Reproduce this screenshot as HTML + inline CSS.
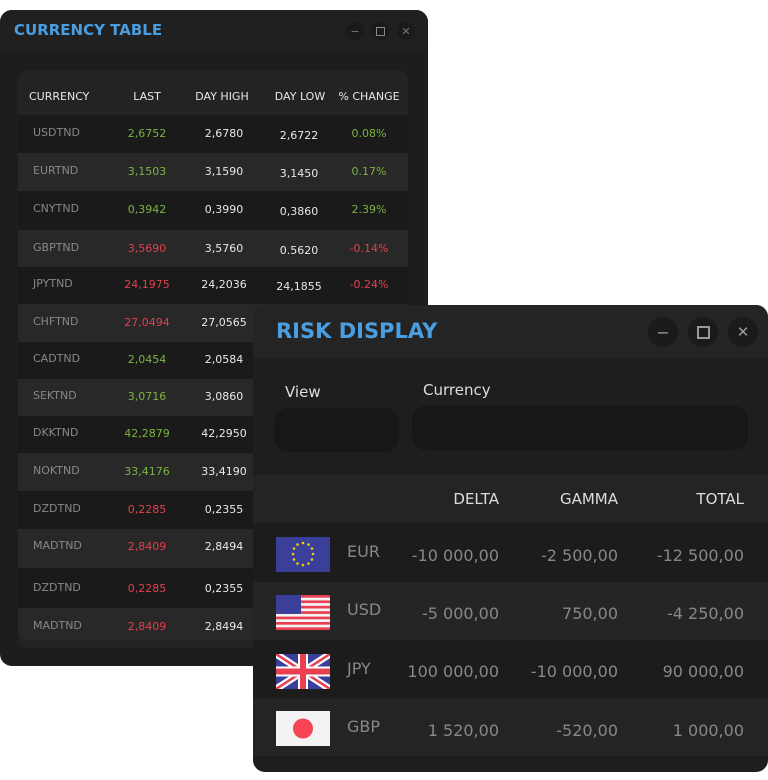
<!DOCTYPE html>
<html><head><style>
*{margin:0;padding:0;box-sizing:border-box}
body{width:768px;height:780px;background:#fff;position:relative;overflow:hidden;font-family:"DejaVu Sans","Liberation Sans",sans-serif}
.win{position:absolute;background:#1e1e1e;border-radius:12px;overflow:hidden}
.t{position:absolute;white-space:nowrap}
.c{transform:translateX(-50%)}
.r{transform:translateX(-100%)}
.btn{position:absolute;border-radius:50%;background:#1a1a1a;color:#777;display:flex;align-items:center;justify-content:center}
.g{color:#7cb342}.rd{color:#e0404e}.w{color:#e8e8e8}.n{color:#888}
#ct{position:absolute;left:18px;top:0;width:390px;height:700px;font-size:11px;z-index:1}
#rw{z-index:2}
</style></head><body>

<div class="win" style="left:0;top:10px;width:428px;height:656px;background:#1d1d1d">
 <div style="position:absolute;left:0;top:0;width:428px;height:42px;background:#202020"></div>
 <div class="t" style="left:14px;top:11px;font-size:15px;font-weight:bold;color:#4a9ee0">CURRENCY TABLE</div>
 <div class="btn" style="left:346px;top:12px;width:18px;height:18px;font-size:11px">−</div>
 <div class="btn" style="left:371px;top:12px;width:18px;height:18px"><div style="width:9px;height:9px;border:1.5px solid #888"></div></div>
 <div class="btn" style="left:397px;top:12px;width:18px;height:18px;font-size:11px">✕</div>
 <div style="position:absolute;left:18px;top:60px;width:390px;height:578px;background:#232323;border-radius:10px"></div>
</div>
<div id="ct"></div>

<div class="win" id="rw" style="left:253px;top:305px;width:515px;height:467px;background:#1e1e1e">
 <div style="position:absolute;left:0;top:0;width:515px;height:53px;background:#242424"></div>
 <div class="t" style="left:23px;top:14px;font-size:21px;font-weight:bold;color:#4a9ee0">RISK DISPLAY</div>
 <div class="btn" style="left:395px;top:12px;width:30px;height:30px;font-size:16px;color:#999">−</div>
 <div class="btn" style="left:435px;top:12px;width:30px;height:30px"><div style="width:13px;height:13px;border:2px solid #999"></div></div>
 <div class="btn" style="left:475px;top:12px;width:30px;height:30px;font-size:15px;color:#999">✕</div>
 <div class="t" style="left:32px;top:78px;font-size:15px;color:#ddd">View</div>
 <div class="t" style="left:170px;top:76px;font-size:15px;color:#ddd">Currency</div>
 <div style="position:absolute;left:21px;top:103px;width:125px;height:44px;background:#171717;border-radius:14px"></div>
 <div style="position:absolute;left:159px;top:101px;width:336px;height:44px;background:#171717;border-radius:14px"></div>
 <div style="position:absolute;left:0;top:170px;width:515px;height:48px;background:#242424"></div>
 <div class="t r" style="left:246px;top:185px;font-size:15px;color:#ddd">DELTA</div>
 <div class="t r" style="left:365px;top:185px;font-size:15px;color:#ddd">GAMMA</div>
 <div class="t r" style="left:491px;top:185px;font-size:15px;color:#ddd">TOTAL</div>
 <div style="position:absolute;left:0;top:218px;width:515px;height:59px;background:#1c1c1c"></div>
 <div style="position:absolute;left:0;top:277px;width:515px;height:58px;background:#252525"></div>
 <div style="position:absolute;left:0;top:335px;width:515px;height:58px;background:#1c1c1c"></div>
 <div style="position:absolute;left:0;top:393px;width:515px;height:58px;background:#242424"></div>
 <svg style="position:absolute;left:23px;top:232px" width="54" height="35" viewBox="0 0 54 35"><rect width="54" height="35" fill="#3a3f9a"/>
  <g fill="#f5d000"><circle cx="27" cy="6" r="1.3"/><circle cx="32.5" cy="7.5" r="1.3"/><circle cx="36" cy="11.5" r="1.3"/><circle cx="37" cy="17" r="1.3"/><circle cx="36" cy="22.5" r="1.3"/><circle cx="32.5" cy="26.5" r="1.3"/><circle cx="27" cy="28" r="1.3"/><circle cx="21.5" cy="26.5" r="1.3"/><circle cx="18" cy="22.5" r="1.3"/><circle cx="17" cy="17" r="1.3"/><circle cx="18" cy="11.5" r="1.3"/><circle cx="21.5" cy="7.5" r="1.3"/></g></svg>
 <svg style="position:absolute;left:23px;top:290px" width="54" height="35" viewBox="0 0 54 35"><rect width="54" height="35" fill="#f3f3f3"/>
  <g fill="#e84050"><rect y="0" width="54" height="2.7"/><rect y="5.4" width="54" height="2.7"/><rect y="10.8" width="54" height="2.7"/><rect y="16.2" width="54" height="2.7"/><rect y="21.6" width="54" height="2.7"/><rect y="27" width="54" height="2.7"/><rect y="32.3" width="54" height="2.7"/></g>
  <rect width="25" height="18.9" fill="#3a3f9a"/></svg>
 <svg style="position:absolute;left:23px;top:349px" width="54" height="35" viewBox="0 0 54 35"><rect width="54" height="35" fill="#3a3f9a"/>
  <path d="M0 0L54 35M54 0L0 35" stroke="#fff" stroke-width="7"/><path d="M0 0L54 35M54 0L0 35" stroke="#e84050" stroke-width="2.5"/>
  <path d="M27 0V35M0 17.5H54" stroke="#fff" stroke-width="10"/><path d="M27 0V35M0 17.5H54" stroke="#e84050" stroke-width="6"/></svg>
 <svg style="position:absolute;left:23px;top:406px" width="54" height="35" viewBox="0 0 54 35"><rect width="54" height="35" fill="#f3f3f3"/><circle cx="27" cy="17.5" r="10" fill="#f54456"/></svg>
 <div style="font-size:16px;color:#888">
  <div class="t" style="left:94px;top:237px">EUR</div><div class="t r" style="left:246px;top:241px">-10 000,00</div><div class="t r" style="left:365px;top:241px">-2 500,00</div><div class="t r" style="left:491px;top:241px">-12 500,00</div>
  <div class="t" style="left:94px;top:295px">USD</div><div class="t r" style="left:246px;top:299px">-5 000,00</div><div class="t r" style="left:365px;top:299px">750,00</div><div class="t r" style="left:491px;top:299px">-4 250,00</div>
  <div class="t" style="left:94px;top:354px">JPY</div><div class="t r" style="left:246px;top:357px">100 000,00</div><div class="t r" style="left:365px;top:357px">-10 000,00</div><div class="t r" style="left:491px;top:357px">90 000,00</div>
  <div class="t" style="left:94px;top:412px">GBP</div><div class="t r" style="left:246px;top:416px">1 520,00</div><div class="t r" style="left:365px;top:416px">-520,00</div><div class="t r" style="left:491px;top:416px">1 000,00</div>
 </div>
</div>

<script>
(function(){
var rows=[["USDTND","2,6752","2,6780","2,6722","0.08%","g"],["EURTND","3,1503","3,1590","3,1450","0.17%","g"],["CNYTND","0,3942","0,3990","0,3860","2.39%","g"],["GBPTND","3,5690","3,5760","0.5620","-0.14%","rd"],["JPYTND","24,1975","24,2036","24,1855","-0.24%","rd"],["CHFTND","27,0494","27,0565","","","rd"],["CADTND","2,0454","2,0584","","","g"],["SEKTND","3,0716","3,0860","","","g"],["DKKTND","42,2879","42,2950","","","g"],["NOKTND","33,4176","33,4190","","","g"],["DZDTND","0,2285","0,2355","","","rd"],["MADTND","2,8409","2,8494","","","rd"],["DZDTND","0,2285","0,2355","","","rd"],["MADTND","2,8409","2,8494","","","rd"]];
var ys=[134,172,210,249,285,323,360,397,434,472,510,547,589,627];
var h='<div class="t w" style="left:11px;top:90px">CURRENCY</div><div class="t w c" style="left:129px;top:90px">LAST</div><div class="t w c" style="left:204px;top:90px">DAY HIGH</div><div class="t w c" style="left:282px;top:90px">DAY LOW</div><div class="t w c" style="left:351px;top:90px">% CHANGE</div>';
var bgs='',txt='';
for(var i=0;i<rows.length;i++){var r=rows[i],y=ys[i];var t0=(i==0?115:(ys[i-1]+y)/2),b0=(i==rows.length-1?640:(y+ys[i+1])/2);
var bg=i%2?'#282828':'#1a1a1a';bgs+='<div style="position:absolute;left:0;top:'+t0+'px;width:390px;height:'+(b0-t0)+'px;background:'+bg+(i==rows.length-1?';border-radius:0 0 10px 10px':'')+'"></div>';
var cl=r[5];txt+='<div class="t n" style="left:15px;top:'+(y-8)+'px">'+r[0]+'</div><div class="t c '+cl+'" style="left:129px;top:'+(y-7)+'px">'+r[1]+'</div><div class="t c w" style="left:206px;top:'+(y-7)+'px">'+r[2]+'</div>';
if(r[3])txt+='<div class="t c w" style="left:281px;top:'+(y-5)+'px">'+r[3]+'</div><div class="t c '+cl+'" style="left:351px;top:'+(y-7)+'px">'+r[4]+'</div>';}
document.getElementById('ct').innerHTML=bgs+h+txt;
})();
</script>
</body></html>
